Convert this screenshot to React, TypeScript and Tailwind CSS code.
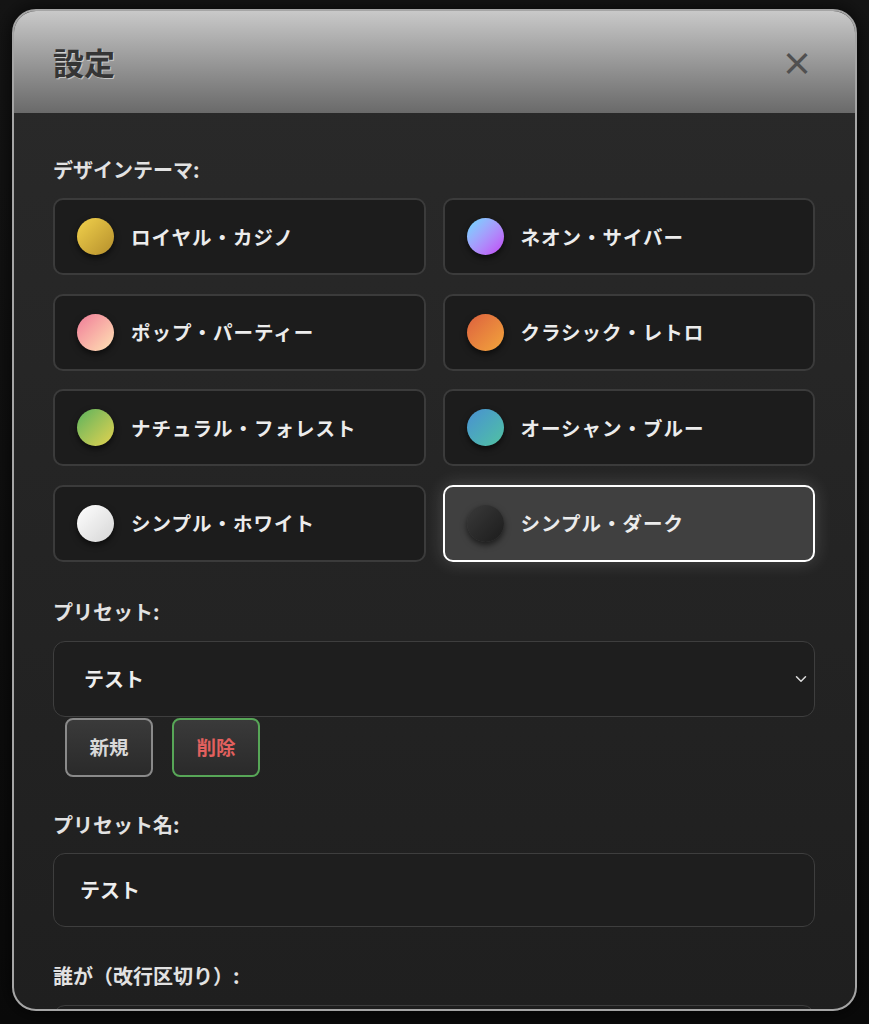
import { ChevronDown } from 'lucide-react';

const themes = [
  { id: 'royal', label: 'ロイヤル・カジノ', dot: 'bg-gradient-to-br from-[#f2d24c] to-[#b58f2c]' },
  { id: 'neon', label: 'ネオン・サイバー', dot: 'bg-gradient-to-br from-[#5fdcff] to-[#c13cf5]' },
  { id: 'pop', label: 'ポップ・パーティー', dot: 'bg-gradient-to-br from-[#ee7a98] to-[#fde3b4]' },
  { id: 'retro', label: 'クラシック・レトロ', dot: 'bg-gradient-to-br from-[#dc5f3e] to-[#f2a53a]' },
  { id: 'forest', label: 'ナチュラル・フォレスト', dot: 'bg-gradient-to-br from-[#55b25c] to-[#e2d24e]' },
  { id: 'ocean', label: 'オーシャン・ブルー', dot: 'bg-gradient-to-br from-[#4a8fd2] to-[#52c2a0]' },
  { id: 'white', label: 'シンプル・ホワイト', dot: 'bg-gradient-to-br from-[#ffffff] to-[#d6d6d6]' },
  { id: 'dark', label: 'シンプル・ダーク', dot: 'bg-gradient-to-br from-[#3a3a3a] to-[#1c1c1c]' },
];

export default function App() {
  const selected = 'dark';

  return (
    <div
      className="h-[1024px] overflow-hidden bg-gradient-to-b from-[#151515] to-[#0a0a0a] px-[12px] pt-[9px]"
      style={{ fontFamily: '"Noto Sans CJK JP", "Noto Sans", sans-serif' }}
    >
      <div className="h-[1002px] overflow-hidden rounded-[24px] border-2 border-[#a5a5a5] bg-gradient-to-b from-[#2a2a2a] to-[#1f1f1f] shadow-[0_0_20px_rgba(0,0,0,0.8)]">
        {/* Header */}
        <div className="flex h-[102px] items-center justify-between bg-gradient-to-b from-[#c9c9c9] to-[#6a6a6a] pl-[39px] pr-[42px]">
          <h1 className="text-[31px] font-bold text-[#353535] [text-shadow:1px_1px_0_rgba(255,255,255,0.5)]">設定</h1>
          <button className="text-[32px] font-bold leading-none text-[#505050]">×</button>
        </div>

        <div className="pl-[39px] pr-[40px] pt-[44px]">
          {/* Theme */}
          <p className="text-[20px] font-bold leading-[26px] text-[#e2e2e2]">デザインテーマ:</p>
          <div className="mt-[15px] grid grid-cols-2 gap-x-[17px] gap-y-[18.5px]">
            {themes.map((t) => (
              <div
                key={t.id}
                className={`flex h-[77px] items-center rounded-[10px] border-2 pl-[22px] ${
                  t.id === selected
                    ? 'border-white bg-[#404040] shadow-[0_0_18px_rgba(255,255,255,0.18)]'
                    : 'border-[#3b3b3b] bg-[#1c1c1c]'
                }`}
              >
                <span className={`h-[37px] w-[37px] rounded-full shadow-[0_3px_6px_rgba(0,0,0,0.6)] ${t.dot}`} />
                <span className="ml-[17px] text-[19.5px] font-bold tracking-[1px] text-[#ececec]">{t.label}</span>
              </div>
            ))}
          </div>

          {/* Preset */}
          <p className="mt-[37px] text-[20px] font-bold leading-[26px] text-[#e2e2e2]">プリセット:</p>
          <div className="mt-[16px] flex h-[76px] items-center justify-between rounded-[12px] border border-[#3e3e3e] bg-[#1e1e1e] pl-[30px] pr-[4px]">
            <span className="text-[20px] font-bold text-[#eeeeee]">テスト</span>
            <ChevronDown className="h-[18px] w-[18px] text-[#dddddd]" strokeWidth={2} />
          </div>
          <div className="mt-[1px] flex gap-[19px] pl-[12px]">
            <button className="h-[59px] w-[88px] rounded-[8px] border-2 border-[#8a8a8a] bg-gradient-to-b from-[#3a3a3a] to-[#2a2a2a] text-[19.5px] font-bold text-[#d8d8d8]">
              新規
            </button>
            <button className="h-[59px] w-[88px] rounded-[8px] border-2 border-[#57a657] bg-gradient-to-b from-[#3a3a3a] to-[#2a2a2a] text-[19.5px] font-bold text-[#e2605e]">
              削除
            </button>
          </div>

          {/* Preset name */}
          <p className="mt-[35px] text-[20px] font-bold leading-[26px] text-[#e2e2e2]">プリセット名:</p>
          <div className="mt-[15px] flex h-[74px] items-center rounded-[12px] border border-[#3e3e3e] bg-[#1e1e1e] pl-[26px]">
            <span className="text-[20px] font-bold text-[#eeeeee]">テスト</span>
          </div>

          {/* Who */}
          <p className="mt-[36px] text-[20px] font-bold leading-[26px] text-[#e2e2e2]">誰が（改行区切り）:</p>
          <div className="mt-[16px] h-[74px] rounded-[12px] border border-[#3e3e3e] bg-[#1e1e1e]" />
        </div>
      </div>
    </div>
  );
}
